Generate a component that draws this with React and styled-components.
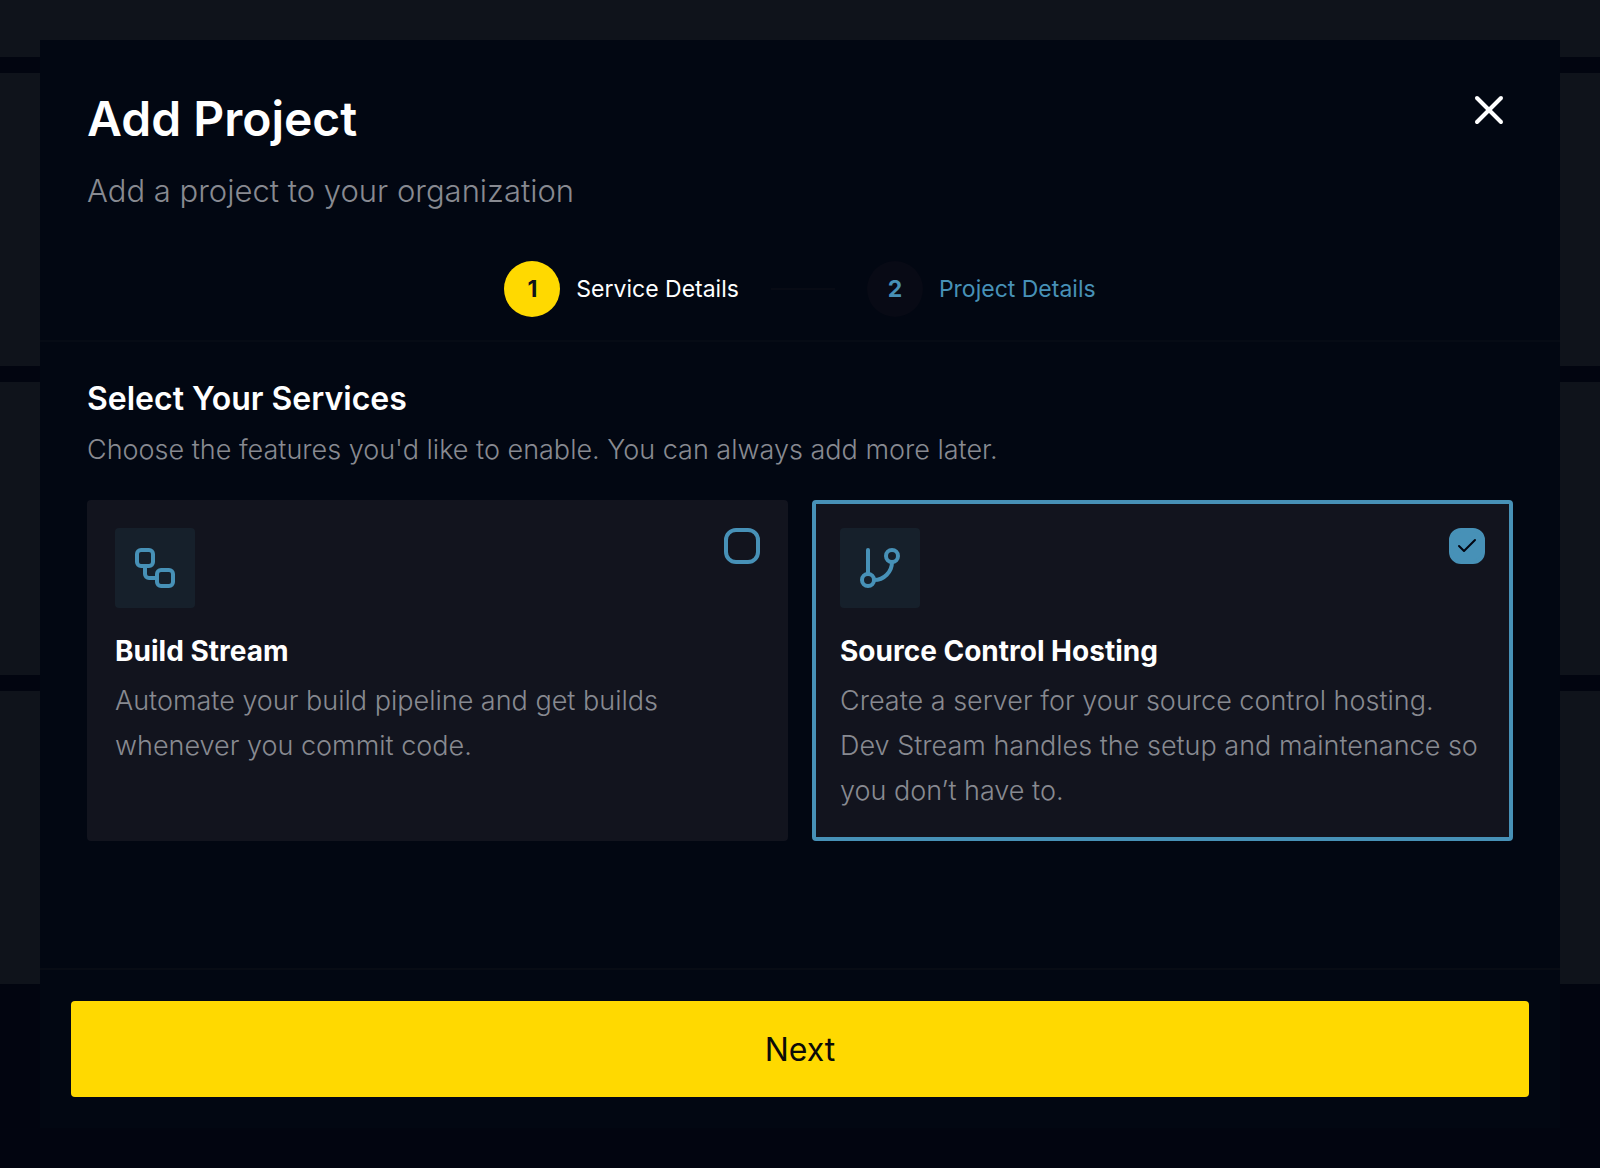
import React, { useState } from 'react';
import styled, { createGlobalStyle } from 'styled-components';
import { Check, GitBranch, Workflow, X } from 'lucide-react';

const GlobalStyle = createGlobalStyle`
  * {
    box-sizing: border-box;
  }

  body {
    margin: 0;
    background: #020510;
    color: #fff;
    font-family: Inter, 'Open Sans', sans-serif;
  }

  h1, h2, h3, p, ol {
    margin: 0;
    padding: 0;
    font-weight: 300;
  }
`;

const Page = styled.div`
  display: flex;
  flex-direction: column;
  gap: 16px;
`;

const Panel = styled.div`
  height: ${({ $short }) => ($short ? '57px' : '293px')};
  background: #0f131b;
`;

const Overlay = styled.div`
  position: fixed;
  inset: 0;
  display: flex;
  padding: 40px;
`;

const Dialog = styled.section`
  display: flex;
  flex-direction: column;
  flex: 1;
  min-width: 0;
  overflow: auto;
  background: #020712;
`;

const Header = styled.header`
  padding: 46px 47px 23px;
  border-bottom: 2px solid #060b15;
`;

const TitleRow = styled.div`
  display: flex;
  justify-content: space-between;
  align-items: flex-start;
`;

const Title = styled.h1`
  font-size: 48px;
  font-weight: 600;
  line-height: 66px;
`;

const Subtitle = styled.p`
  margin-top: 16px;
  color: #888a91;
  font-size: 31px;
  line-height: 45px;
`;

const CloseButton = styled.button`
  display: flex;
  padding: 0;
  border: none;
  background: none;
  color: #fff;
  cursor: pointer;
`;

const Steps = styled.ol`
  display: flex;
  justify-content: center;
  align-items: center;
  gap: 32px;
  margin-top: 48px;
  list-style: none;
`;

const Step = styled.li`
  display: flex;
  align-items: center;
  gap: 16px;
  color: ${({ $active }) => ($active ? '#fff' : '#4791b7')};
  font-size: 23px;
  font-weight: 400;
  line-height: 32px;
`;

const StepNumber = styled.span`
  display: flex;
  justify-content: center;
  align-items: center;
  width: 56px;
  height: 56px;
  border-radius: 50%;
  background: ${({ $active }) => ($active ? '#ffd900' : '#080a15')};
  color: ${({ $active }) => ($active ? '#10131a' : '#4791b7')};
  font-weight: 700;
`;

const StepLine = styled.li`
  width: 64px;
  height: 2px;
  background: #080b15;
`;

const Body = styled.div`
  flex: 1;
  padding: 34px 47px;
`;

const SectionTitle = styled.h2`
  font-size: 32px;
  font-weight: 600;
  line-height: 45px;
`;

const SectionText = styled.p`
  margin-top: 6px;
  color: #888a91;
  font-size: 27px;
  line-height: 46px;
`;

const Services = styled.div`
  display: grid;
  grid-template-columns: 1fr 1fr;
  gap: 24px;
  margin-top: 27px;
`;

const Card = styled.label`
  display: block;
  padding: 24px;
  border: 4px solid ${({ $selected }) => ($selected ? '#4791b7' : '#12141e')};
  border-radius: 4px;
  background: #12141e;
  cursor: pointer;
`;

const CardTop = styled.div`
  display: flex;
  justify-content: space-between;
  align-items: flex-start;
`;

const IconBox = styled.span`
  display: flex;
  padding: 16px;
  border-radius: 4px;
  background: #16202b;
  color: #4791b7;
`;

const CheckWrap = styled.span`
  display: grid;
  place-items: center;

  & > * {
    grid-area: 1 / 1;
  }

  svg {
    color: #020611;
    pointer-events: none;
  }
`;

const Checkbox = styled.input`
  appearance: none;
  width: 36px;
  height: 36px;
  margin: 0;
  border: 4px solid #4791b7;
  border-radius: 12px;
  cursor: pointer;

  &:checked {
    background: #4791b7;
  }
`;

const CardTitle = styled.h3`
  margin-top: 24px;
  font-size: 28px;
  font-weight: 700;
  line-height: 38px;
`;

const CardText = styled.p`
  margin-top: 8px;
  color: #888a91;
  font-size: 27px;
  line-height: 45px;
`;

const Footer = styled.footer`
  padding: 31px;
  border-top: 2px solid #080c15;
`;

const NextButton = styled.button`
  width: 100%;
  height: 96px;
  border: none;
  border-radius: 4px;
  background: #ffd900;
  color: #0b0b08;
  font-family: inherit;
  font-size: 32px;
  font-weight: 400;
  cursor: pointer;
`;

const services = [
  {
    id: 'build',
    icon: Workflow,
    title: 'Build Stream',
    text: 'Automate your build pipeline and get builds whenever you commit code.',
  },
  {
    id: 'source',
    icon: GitBranch,
    title: 'Source Control Hosting',
    text: 'Create a server for your source control hosting. Dev Stream handles the setup and maintenance so you don’t have to.',
  },
];

const ServiceCard = ({ service, selected, onToggle }) => {
  const Icon = service.icon;

  return (
    <Card $selected={selected} htmlFor={service.id}>
      <CardTop>
        <IconBox>
          <Icon size={48} />
        </IconBox>
        <CheckWrap>
          <Checkbox
            type="checkbox"
            id={service.id}
            checked={selected}
            onChange={() => onToggle(service.id)}
          />
          {selected && <Check size={24} />}
        </CheckWrap>
      </CardTop>
      <CardTitle>{service.title}</CardTitle>
      <CardText>{service.text}</CardText>
    </Card>
  );
};

const App = () => {
  const [selected, setSelected] = useState(['source']);

  const toggle = (id) => {
    setSelected((current) =>
      current.includes(id) ? current.filter((item) => item !== id) : [...current, id]
    );
  };

  return (
    <>
      <GlobalStyle />
      <Page>
        <Panel $short />
        <Panel />
        <Panel />
        <Panel />
      </Page>
      <Overlay>
        <Dialog role="dialog" aria-labelledby="dialog-title">
          <Header>
            <TitleRow>
              <Title id="dialog-title">Add Project</Title>
              <CloseButton type="button" aria-label="Close">
                <X size={48} />
              </CloseButton>
            </TitleRow>
            <Subtitle>Add a project to your organization</Subtitle>
            <Steps>
              <Step $active>
                <StepNumber $active>1</StepNumber>
                Service Details
              </Step>
              <StepLine aria-hidden="true" />
              <Step>
                <StepNumber>2</StepNumber>
                Project Details
              </Step>
            </Steps>
          </Header>
          <Body>
            <SectionTitle>Select Your Services</SectionTitle>
            <SectionText>
              Choose the features you'd like to enable. You can always add more later.
            </SectionText>
            <Services>
              {services.map((service) => (
                <ServiceCard
                  key={service.id}
                  service={service}
                  selected={selected.includes(service.id)}
                  onToggle={toggle}
                />
              ))}
            </Services>
          </Body>
          <Footer>
            <NextButton type="button">Next</NextButton>
          </Footer>
        </Dialog>
      </Overlay>
    </>
  );
};

export default App;
